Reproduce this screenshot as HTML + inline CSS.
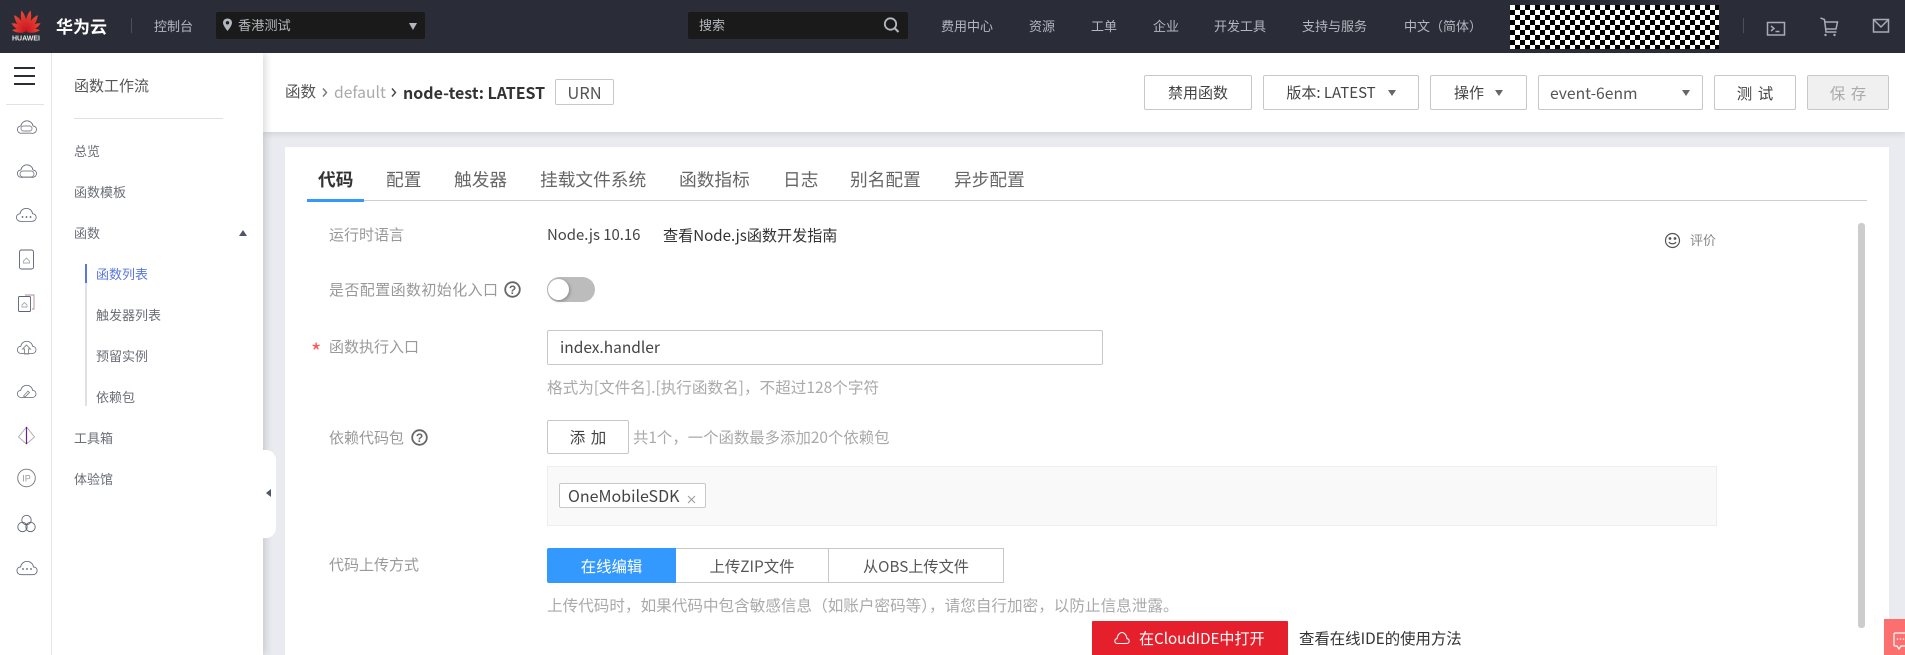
<!DOCTYPE html>
<html lang="zh"><head><meta charset="utf-8"><title>函数</title>
<style>
html,body{margin:0;padding:0;width:1905px;height:655px;overflow:hidden;background:#e9ebf0}
body{position:relative;font-family:"Noto Sans CJK SC","Liberation Sans",sans-serif;color:#333}
.a{position:absolute;box-sizing:border-box}
.t{position:absolute;white-space:nowrap;line-height:20px;height:20px}
.n{color:#b4b7bd;font-size:13px}
.m{color:#6a6e78;font-size:13px}
.l{color:#999;font-size:15px}
.h{color:#aaa;font-size:15.6px}
.tab{color:#666;font-size:17.7px;line-height:24px;height:24px}
.b{position:absolute;box-sizing:border-box;border:1px solid #c8c8c8;border-radius:2px;background:#fff;font-size:15px;color:#444;display:flex;align-items:center;justify-content:center;white-space:nowrap}
.arr{display:inline-block;width:0;height:0;border-left:4px solid transparent;border-right:4px solid transparent;border-top:6px solid #666}
svg{position:absolute;overflow:visible}
</style></head><body>

<!-- top toolbar background -->
<div class="a" style="left:263px;top:53px;width:1642px;height:79px;background:#fff;box-shadow:0 2px 6px rgba(0,0,0,.1)"></div>

<!-- header -->
<div class="a" style="left:0;top:0;width:1905px;height:53px;background:#2a2d37"></div>
<svg style="left:0;top:0" width="60" height="53">
<defs><linearGradient id="g" x1="0" y1="1" x2="0" y2="0"><stop offset="0" stop-color="#c8141f"/><stop offset="1" stop-color="#ee4a36"/></linearGradient></defs>
<g fill="url(#g)">
<path d="M0 0C-3.5-7-3.5-15-1-22C3-16 3.500-7 0 0Z" transform="translate(25.500 32) rotate(-8)"/>
<path d="M0 0C3.500-7 3.500-15 1-22C-3-16-3.500-7 0 0Z" transform="translate(26.500 32) rotate(8)"/>
<path d="M0 0C-3.500-6-3.500-14-1-20C3-15 3.500-6 0 0Z" transform="translate(25 32) rotate(-30)"/>
<path d="M0 0C3.500-6 3.500-14 1-20C-3-15-3.500-6 0 0Z" transform="translate(27 32) rotate(30)"/>
<path d="M0 0C-3-5-3-11-1-16C3-12 3-5 0 0Z" transform="translate(25 32) rotate(-54)"/>
<path d="M0 0C3-5 3-11 1-16C-3-12-3-5 0 0Z" transform="translate(27 32) rotate(54)"/>
<path d="M0 0C-2.500-4-2.500-9-1-13C2.500-9 2.500-4 0 0Z" transform="translate(25 32) rotate(-78)"/>
<path d="M0 0C2.500-4 2.500-9 1-13C-2.500-9-2.500-4 0 0Z" transform="translate(27 32) rotate(78)"/>
</g>
<text x="26" y="40.500" text-anchor="middle" fill="#e8e8e8" font-size="7" font-weight="700" font-family="Liberation Sans">HUAWEI</text>
</svg>
<div class="t" style="left:56px;top:16px;color:#fff;font-size:17px;font-weight:700">华为云</div>
<div class="a" style="left:131px;top:18px;width:1px;height:15px;background:#4d5058"></div>
<div class="t n" style="left:154px;top:16px;">控制台</div>
<div class="a" style="left:216px;top:12px;width:209px;height:27px;background:#1a1a1a;border-radius:2px"></div>
<svg style="left:222px;top:18px" width="11" height="14" viewBox="0 0 11 14"><path d="M5.500 0.500C2.700 0.500 1 2.500 1 4.800C1 7.800 5.500 13 5.500 13C5.500 13 10 7.800 10 4.800C10 2.500 8.300 0.500 5.500 0.500Z" fill="#b4b7bd"/><circle cx="5.500" cy="4.800" r="1.700" fill="#1a1a1a"/></svg>
<div class="t n" style="left:238px;top:15px;font-size:13.2px">香港测试</div>
<div class="a" style="left:409px;top:23px;width:0;height:0;border-left:4px solid transparent;border-right:4px solid transparent;border-top:7px solid #b4b7bd"></div>

<div class="a" style="left:688px;top:12px;width:220px;height:27px;background:#1a1a1a;border-radius:2px"></div>
<div class="t n" style="left:699px;top:15px;">搜索</div>
<svg style="left:883px;top:17px" width="17" height="16" viewBox="0 0 17 16"><circle cx="7.500" cy="7" r="5.700" fill="none" stroke="#b4b7bd" stroke-width="1.800"/><path d="M11.500 11L15.500 15" stroke="#b4b7bd" stroke-width="2" fill="none"/></svg>

<div class="t n" style="left:941px;top:16px;">费用中心</div>
<div class="t n" style="left:1029px;top:16px;">资源</div>
<div class="t n" style="left:1091px;top:16px;">工单</div>
<div class="t n" style="left:1153px;top:16px;">企业</div>
<div class="t n" style="left:1214px;top:16px;">开发工具</div>
<div class="t n" style="left:1302px;top:16px;">支持与服务</div>
<div class="t n" style="left:1404px;top:16px;">中文（简体）</div>
<div class="a" style="left:1510px;top:5px;width:209px;height:44px;background:repeating-conic-gradient(#000 0 25%,#fff 0 50%) 0 0/10px 10px"></div>
<div class="a" style="left:1743px;top:18px;width:1px;height:15px;background:#4d5058"></div>
<svg style="left:1750px;top:5px" width="155" height="40" fill="none" stroke="#a9acb4" stroke-width="1.500">
<rect x="17.500" y="17.500" width="17" height="12.500"/><path d="M21 21L24 23.500L21 26M25.500 26.500H29.500"/>
<path d="M70.500 13L74.500 14.500L76 27H86.500M75 17H87.500L86 24H76" /><circle cx="75.500" cy="30" r="1.200" fill="#a9acb4" stroke="none"/><circle cx="84.500" cy="30" r="1.200" fill="#a9acb4" stroke="none"/>
<rect x="123.500" y="14.500" width="15" height="12.500"/><path d="M124 15L131 22L138 15"/>
</svg>

<!-- menu panel -->
<div class="a" style="left:52px;top:53px;width:211px;height:602px;background:#fff;box-shadow:2px 0 8px rgba(0,0,0,.16);clip-path:inset(0 -20px 0 0)"></div>
<div class="a" style="left:263px;top:450px;width:13px;height:88px;background:#fff;border-radius:0 10px 10px 0"></div>
<div class="a" style="left:266px;top:489px;width:0;height:0;border-top:4px solid transparent;border-bottom:4px solid transparent;border-right:5px solid #50566a"></div>
<div class="t" style="left:74px;top:76px;color:#555;font-size:15px">函数工作流</div>
<div class="a" style="left:74px;top:118px;width:149px;height:1px;background:#dfe0e5"></div>
<div class="t m" style="left:74px;top:141px">总览</div>
<div class="t m" style="left:74px;top:182px">函数模板</div>
<div class="t m" style="left:74px;top:223px">函数</div>
<div class="a" style="left:239px;top:230px;width:0;height:0;border-left:4.500px solid transparent;border-right:4.500px solid transparent;border-bottom:6px solid #50566a"></div>
<div class="a" style="left:85px;top:264px;width:2px;height:142px;background:#dfe0e8"></div>
<div class="a" style="left:85px;top:264px;width:2px;height:19px;background:#5a78dc"></div>
<div class="t" style="left:96px;top:264px;color:#5a78dc;font-size:13px">函数列表</div>
<div class="t m" style="left:96px;top:305px">触发器列表</div>
<div class="t m" style="left:96px;top:346px">预留实例</div>
<div class="t m" style="left:96px;top:387px">依赖包</div>
<div class="t m" style="left:74px;top:428px">工具箱</div>
<div class="t m" style="left:74px;top:469px">体验馆</div>

<!-- left rail -->
<div class="a" style="left:0;top:53px;width:52px;height:602px;background:#fff;border-right:1px solid #e3e4e8"></div>
<div class="a" style="left:14px;top:67px;width:21px;height:2px;background:#2a2d37"></div>
<div class="a" style="left:14px;top:75px;width:21px;height:2px;background:#2a2d37"></div>
<div class="a" style="left:14px;top:83px;width:21px;height:2px;background:#2a2d37"></div>
<div class="a" style="left:6px;top:104px;width:38px;height:1px;background:#e1e2e6"></div>
<svg style="left:0;top:0" width="52" height="655" fill="none" stroke="#5d6378" stroke-width=".9">
<defs><path id="c" d="M6 16C3 16 1 14 1 11.500C1 9 3 7.500 5 7.500C5.500 4 8.500 1.500 12 1.500C15.500 1.500 18.500 4 19 7.500C21 7.500 23 9 23 11.500C23 14 21 16 18 16Z"/></defs>
<use href="#c" transform="translate(16.500 119.500) scale(.87)"/><rect x="21" y="126" width="11" height="5" rx="2.500" stroke="#888"/><path d="M21 133H32" stroke="#aaa"/>
<use href="#c" transform="translate(16.500 163.500) scale(.87)"/><rect x="20" y="171" width="14" height="6" rx="3" stroke="#888"/>
<use href="#c" transform="translate(15.500 207) scale(.9)"/><g fill="#555b70" stroke="none"><circle cx="22.500" cy="217" r=".9"/><circle cx="26.500" cy="217" r=".9"/><circle cx="30.500" cy="217" r=".9"/></g>
<rect x="19.500" y="250" width="14" height="19" rx="2"/><path d="M23.500 261L26.500 258L29.500 261V263H23.500Z" stroke="#aaa"/>
<path d="M25 295H34V309H32" stroke="#b08a9a"/><rect x="18.500" y="296.500" width="12" height="15" rx="1"/><path d="M22 305L24.500 302.500L27 305V307H22Z" stroke="#aaa"/>
<use href="#c" transform="translate(16.500 340) scale(.85)"/><path d="M26.500 345L22.500 349H24.500V354H28.500V349H30.500Z" stroke="#888"/>
<use href="#c" transform="translate(16.500 384) scale(.85)"/><path d="M23.500 396L28 391L29.500 392.500L25 397Z" stroke="#888"/>
<path d="M26.500 427L18.500 437L26.500 444L34.500 437Z" stroke="#aaa"/><path d="M26.500 427V444" stroke="#6c1d8e" stroke-width="1.200"/>
<circle cx="26.500" cy="478" r="8.800" stroke="#777"/><text x="26.500" y="481.500" font-size="9" text-anchor="middle" fill="#999" stroke="none" font-family="Liberation Sans">IP</text>
<circle cx="26.500" cy="520" r="4.700"/><circle cx="22.500" cy="527" r="4.700"/><circle cx="30.500" cy="527" r="4.700"/>
<use href="#c" transform="translate(16 560) scale(.92)"/><g fill="#555b70" stroke="none"><circle cx="23" cy="569" r=".9"/><circle cx="27" cy="569" r=".9"/><circle cx="31" cy="569" r=".9"/></g>
</svg>

<!-- toolbar content -->
<div class="t" style="left:285px;top:81px;font-size:15.5px;color:#555">函数</div>
<svg style="left:320px;top:85px" width="80" height="16" fill="none" stroke-width="1.400"><path d="M3 3.500L6.500 7.500L3 11.500" stroke="#777"/><path d="M72 3.500L75.500 7.500L72 11.500" stroke="#444"/></svg>
<div class="t" style="left:334px;top:82px;font-size:15.7px;color:#aaa">default</div>
<div class="t" style="left:403px;top:82px;font-size:16px;font-weight:700;color:#333">node-test: LATEST</div>
<div class="b" style="left:555px;top:79px;width:59px;height:26px;font-size:16.500px;color:#555">URN</div>

<div class="b" style="left:1144px;top:75px;width:108px;height:35px">禁用函数</div>
<div class="b" style="left:1263px;top:75px;width:156px;height:35px">版本: LATEST<span class="arr" style="margin-left:12px"></span></div>
<div class="b" style="left:1430px;top:75px;width:97px;height:35px">操作<span class="arr" style="margin-left:11px"></span></div>
<div class="b" style="left:1538px;top:75px;width:165px;height:35px;justify-content:flex-start;padding-left:11px;color:#555;font-size:15.700px">event-6enm<span class="arr" style="position:absolute;right:12px;top:14px"></span></div>
<div class="b" style="left:1714px;top:75px;width:82px;height:35px;word-spacing:2px;font-size:15.500px">测 试</div>
<div class="b" style="left:1807px;top:75px;width:82px;height:35px;background:#f0f0f0;color:#aaa;word-spacing:2px;font-size:15.500px">保 存</div>

<!-- card -->
<div class="a" style="left:285px;top:147px;width:1604px;height:508px;background:#fff"></div>
<div class="a" style="left:307px;top:200px;width:1560px;height:1px;background:#cfcfcf"></div>
<div class="a" style="left:307px;top:199px;width:57px;height:3px;background:#3399ff"></div>
<div class="t tab" style="left:318px;top:167px;font-weight:700;color:#333">代码</div>
<div class="t tab" style="left:386px;top:167px">配置</div>
<div class="t tab" style="left:454px;top:167px">触发器</div>
<div class="t tab" style="left:540px;top:167px">挂载文件系统</div>
<div class="t tab" style="left:679px;top:167px">函数指标</div>
<div class="t tab" style="left:783px;top:167px">日志</div>
<div class="t tab" style="left:850px;top:167px">别名配置</div>
<div class="t tab" style="left:954px;top:167px">异步配置</div>

<div class="a" style="left:1858px;top:223px;width:7px;height:405px;background:#ccc;border-radius:3px"></div>

<div class="t l" style="left:329px;top:225px">运行时语言</div>
<div class="t" style="left:547px;top:225px;font-size:14.900px;color:#444">Node.js 10.16</div>
<div class="t" style="left:663px;top:225px;font-size:15.100px;color:#333">查看Node.js函数开发指南</div>
<svg style="left:1664px;top:232px" width="17" height="17" fill="none" stroke="#555" stroke-width="1.200"><circle cx="8.500" cy="8.500" r="7"/><path d="M5 10C6 12.300 11 12.300 12 10"/><circle cx="6" cy="6.500" r=".8" fill="#555"/><circle cx="11" cy="6.500" r=".8" fill="#555"/></svg>
<div class="t" style="left:1690px;top:230px;font-size:13px;color:#888">评价</div>

<div class="t l" style="left:329px;top:280px;letter-spacing:.4px">是否配置函数初始化入口</div>
<svg style="left:504px;top:281px" width="17" height="17"><circle cx="8.500" cy="8.500" r="7.300" fill="none" stroke="#666" stroke-width="1.800"/><text x="8.500" y="13" text-anchor="middle" font-size="12" font-weight="700" fill="#666" font-family="Liberation Sans">?</text></svg>
<div class="a" style="left:547px;top:277px;width:48px;height:25px;background:#bcbcbc;border-radius:13px"></div>
<div class="a" style="left:548px;top:279px;width:21px;height:21px;background:#fff;border-radius:50%;box-shadow:1px 1px 3px rgba(0,0,0,.3)"></div>

<div class="t" style="left:311px;top:341px;color:#f55;font-size:22px">*</div>
<div class="t l" style="left:329px;top:337px">函数执行入口</div>
<div class="a" style="left:547px;top:330px;width:556px;height:35px;border:1px solid #c8c8c8;border-radius:2px;background:#fff"></div>
<div class="t" style="left:560px;top:337px;font-size:15.500px;color:#444">index.handler</div>
<div class="t h" style="left:547px;top:377px">格式为[文件名].[执行函数名]，不超过128个字符</div>

<div class="t l" style="left:329px;top:428px">依赖代码包</div>
<svg style="left:411px;top:429px" width="17" height="17"><circle cx="8.500" cy="8.500" r="7.300" fill="none" stroke="#666" stroke-width="1.800"/><text x="8.500" y="13" text-anchor="middle" font-size="12" font-weight="700" fill="#666" font-family="Liberation Sans">?</text></svg>
<div class="b" style="left:547px;top:420px;width:82px;height:34px;font-size:15.500px;word-spacing:2px">添 加</div>
<div class="t h" style="left:633px;top:427px;font-size:15.4px">共1个，一个函数最多添加20个依赖包</div>
<div class="a" style="left:547px;top:466px;width:1170px;height:60px;background:#f9f9f9;border:1px solid #eee"></div>
<div class="a" style="left:559px;top:483px;width:147px;height:25px;background:#fff;border:1px solid #c8c8c8;border-radius:2px"></div>
<div class="t" style="left:568px;top:485px;font-size:16px;color:#444">OneMobileSDK</div>
<svg style="left:687px;top:495px" width="9" height="9" fill="none" stroke="#999" stroke-width="1"><path d="M1 1L8 8M8 1L1 8"/></svg>

<div class="t l" style="left:329px;top:555px">代码上传方式</div>
<div class="b" style="left:547px;top:548px;width:129px;height:35px;background:#3399ff;border-color:#3399ff;color:#fff;font-size:15.400px;border-radius:2px 0 0 2px">在线编辑</div>
<div class="b" style="left:676px;top:548px;width:153px;height:35px;font-size:15.400px;border-radius:0;color:#555;border-left:0">上传ZIP文件</div>
<div class="b" style="left:828px;top:548px;width:176px;height:35px;font-size:15.200px;border-radius:0;color:#555">从OBS上传文件</div>
<div class="t h" style="left:547px;top:595px">上传代码时，如果代码中包含敏感信息（如账户密码等），请您自行加密，以防止信息泄露。</div>

<div class="a" style="left:1092px;top:621px;width:196px;height:34px;background:#e61f2c;border-radius:1px 1px 0 0"></div>
<svg style="left:1114px;top:631px" width="16" height="14" fill="none" stroke="#fff" stroke-width="1.100"><path d="M3.500 12.500C1.500 12.500 .8 11 .8 10C.8 8.800 1.800 7.800 3 7.700C3.300 4.500 5.500 1.500 8 1.500C10.500 1.500 12.700 4.500 13 7.700C14.200 7.800 15.200 8.800 15.200 10C15.200 11 14.500 12.500 12.500 12.500Z"/></svg>
<div class="t" style="left:1139px;top:628px;font-size:15.100px;color:#fff">在CloudIDE中打开</div>
<div class="t" style="left:1299px;top:628px;font-size:15.400px;color:#333">查看在线IDE的使用方法</div>

<div class="a" style="left:1884px;top:619px;width:21px;height:36px;background:#fb6f6f"></div>
<svg style="left:1893px;top:632px" width="12" height="20" fill="none" stroke="#fff" stroke-width="1.200"><path d="M12 1H2A1 1 0 0 0 1 2V13A1 1 0 0 0 2 14H4L6 17L8 14H12"/><g fill="#fff" stroke="none"><circle cx="4.500" cy="7" r=".8"/><circle cx="7.500" cy="7" r=".8"/><circle cx="10.500" cy="7" r=".8"/></g></svg>
</body></html>
